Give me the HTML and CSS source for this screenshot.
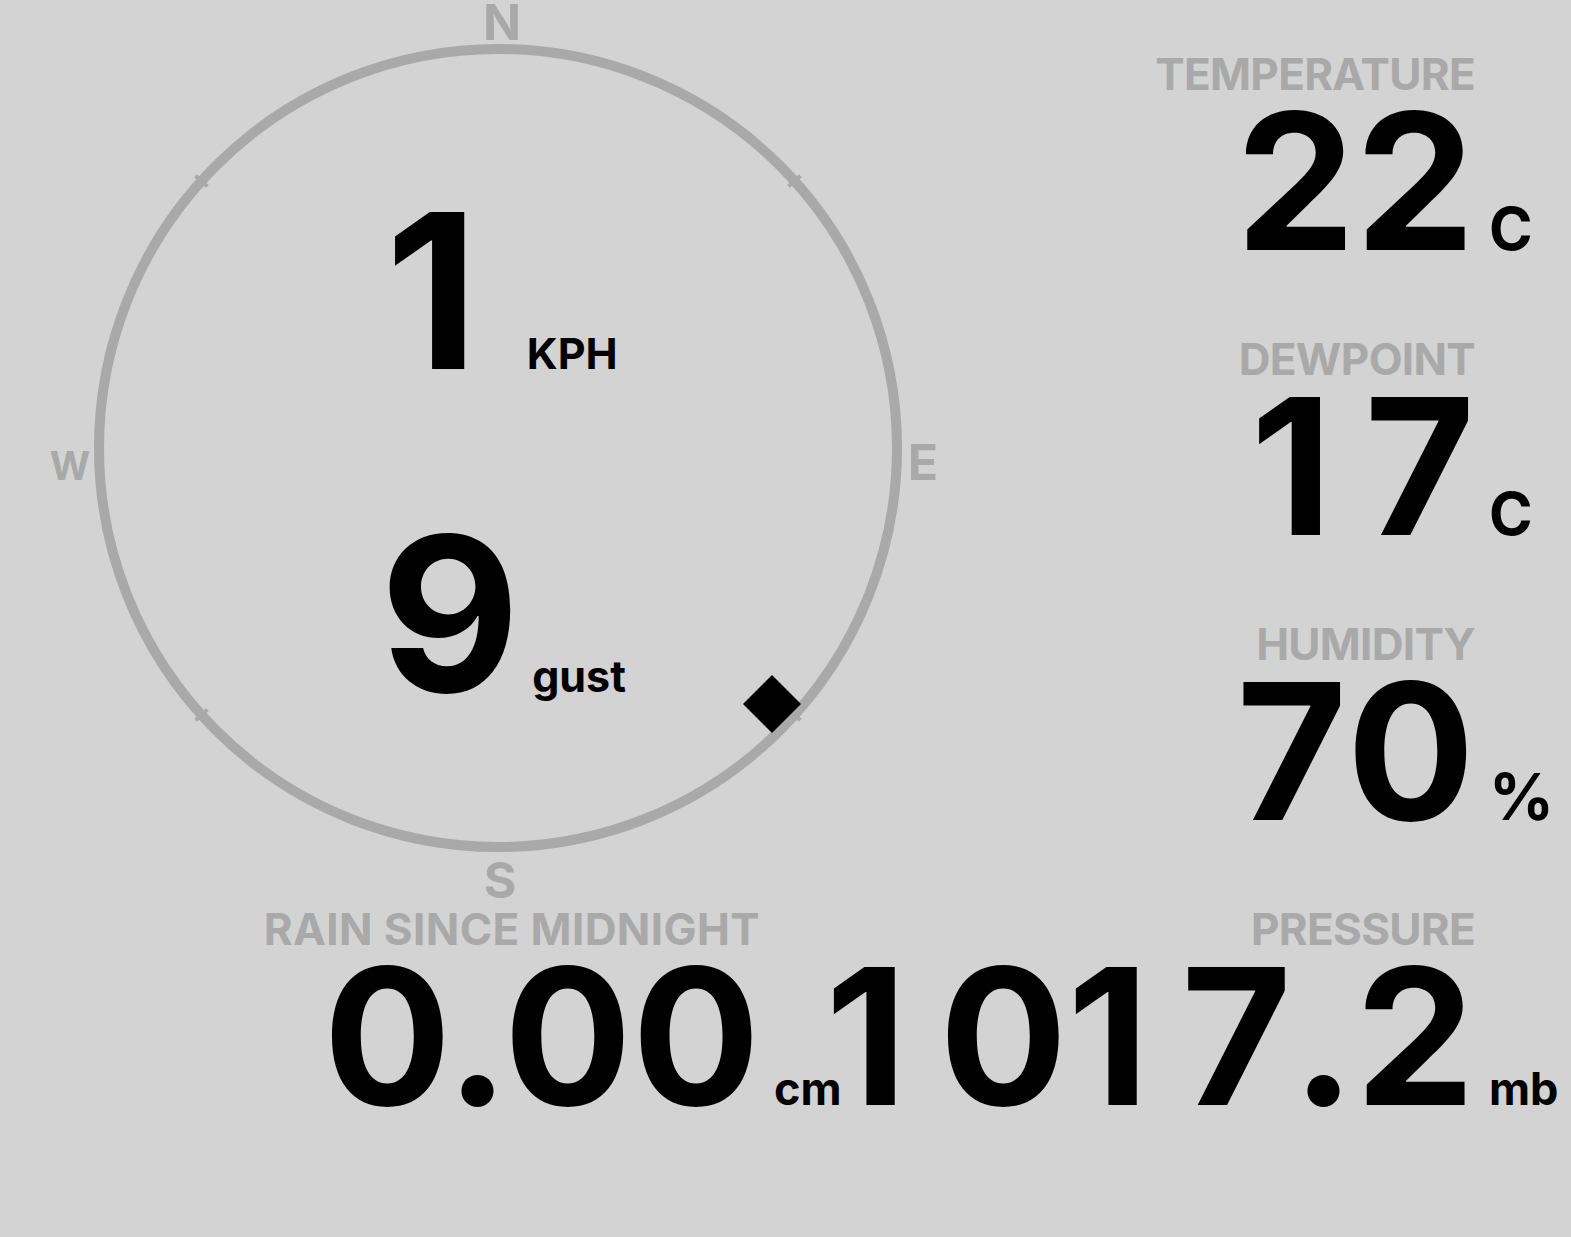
FILE: index.html
```html
<!DOCTYPE html>
<html lang="en">
<head>
  <meta charset="UTF-8" />
  <meta name="viewport" content="width=device-width, initial-scale=1" />
  <title>Weather Station</title>
  <link rel="stylesheet" href="styles.css">
</head>
<body>
  <section class="top">
    <div class="compass">
      <svg class="dial" width="996" height="907" viewBox="0 0 996 907">
        <circle class="ring" cx="498" cy="448" r="399" />
        <g class="ticks">
          <line x1="498" y1="41" x2="498" y2="57" transform="rotate(48 498 448)" />
          <line x1="498" y1="41" x2="498" y2="57" transform="rotate(132 498 448)" />
          <line x1="498" y1="41" x2="498" y2="57" transform="rotate(228 498 448)" />
          <line x1="498" y1="41" x2="498" y2="57" transform="rotate(312 498 448)" />
        </g>
        <text class="cardinal" x="502" y="40">N</text>
        <text class="cardinal" x="923" y="480">E</text>
        <text class="cardinal" x="500" y="898">S</text>
        <text class="cardinal small" x="70" y="480">W</text>
        <!-- direzione del vento -->
        <polygon class="needle" points="772,675 801,704 772,733 743,704" />
      </svg>
      <div class="wind">
        <div class="wind-row">
          <span class="wind-num"><span class="one">1</span></span>
          <span class="wind-unit">KPH</span>
        </div>
        <div class="wind-row">
          <span class="wind-num">9</span>
          <span class="wind-unit">gust</span>
        </div>
      </div>
    </div>

    <div class="stats">
      <div class="stat">
        <div class="label">TEMPERATURE</div>
        <div class="value"><span class="num">22</span><span class="unit">C</span></div>
      </div>
      <div class="stat">
        <div class="label">DEWPOINT</div>
        <div class="value"><span class="num"><span class="one">1</span>7</span><span class="unit">C</span></div>
      </div>
      <div class="stat">
        <div class="label">HUMIDITY</div>
        <div class="value"><span class="num">70</span><span class="unit pct">%</span></div>
      </div>
    </div>
  </section>

  <section class="bottom">
    <div class="stat rain">
      <div class="label wide">RAIN SINCE MIDNIGHT</div>
      <div class="value"><span class="num">0.00</span><span class="unit unit-sm">cm</span></div>
    </div>
    <div class="stat pressure">
      <div class="label">PRESSURE</div>
      <div class="value"><span class="num"><span class="one">1</span>0<span class="one">1</span>7.2</span><span class="unit unit-sm">mb</span></div>
    </div>
  </section>
</body>
</html>
```

FILE: styles.css
```css
:root {
  --bg-color: #d3d3d3;
  --muted: #a9a9a9;
  --text-color: #000;
}
html, body {
  background: var(--bg-color);
}
body {
  margin: 0;
  font-family: Inter, "Liberation Sans", sans-serif;
  font-weight: 700;
  color: var(--text-color);
}
.top {
  display: flex;
  height: 907px;
}
.compass {
  display: grid;
  flex: none;
  width: 996px;
  height: 907px;
}
.dial, .wind {
  grid-area: 1 / 1;
}
.ring {
  fill: none;
  stroke: var(--muted);
  stroke-width: 10;
}
.ticks line {
  stroke: var(--muted);
  stroke-width: 4;
}
.cardinal {
  fill: var(--muted);
  font-family: Inter, "Liberation Sans", sans-serif;
  font-weight: 700;
  font-size: 50px;
  text-anchor: middle;
}
.cardinal.small {
  font-size: 39px;
}
.needle {
  fill: #000;
}
.wind {
  display: flex;
  flex-direction: column;
  align-items: center;
  padding: 191px 96px 0 0;
  gap: 123px;
}
.wind-row {
  display: flex;
  align-items: baseline;
  font-size: 216px;
  line-height: 200px;
}
.wind-unit {
  width: 0;
  font-size: 43px;
  line-height: 1;
  text-indent: 12px;
  white-space: nowrap;
}
/* l'uno di Inter e' stretto: gli do la larghezza delle altre cifre */
.one {
  display: inline-block;
  width: 0.6em;
}
.stats {
  flex: 1;
  display: flex;
  flex-direction: column;
  gap: 71px;
  padding: 52px 96px 0 0;
}
.label {
  font-size: 44px;
  line-height: 44px;
  color: var(--muted);
  text-align: right;
  letter-spacing: -0.7px;
}
.label.wide {
  letter-spacing: 0.4px;
}
.value {
  display: flex;
  justify-content: flex-end;
  align-items: baseline;
  font-size: 190px;
  line-height: 170px;
  font-kerning: none;
}
.rain .value {
  font-kerning: normal;
}
.unit {
  width: 0;
  font-size: 59px;
  line-height: 1;
  text-indent: 14px;
  white-space: nowrap;
}
.unit.pct {
  font-size: 64px;
}
.unit-sm {
  font-size: 45px;
}
.bottom {
  display: flex;
}
.rain {
  flex: none;
  width: 760px;
}
.pressure {
  flex: 1;
  padding-right: 96px;
}
```
